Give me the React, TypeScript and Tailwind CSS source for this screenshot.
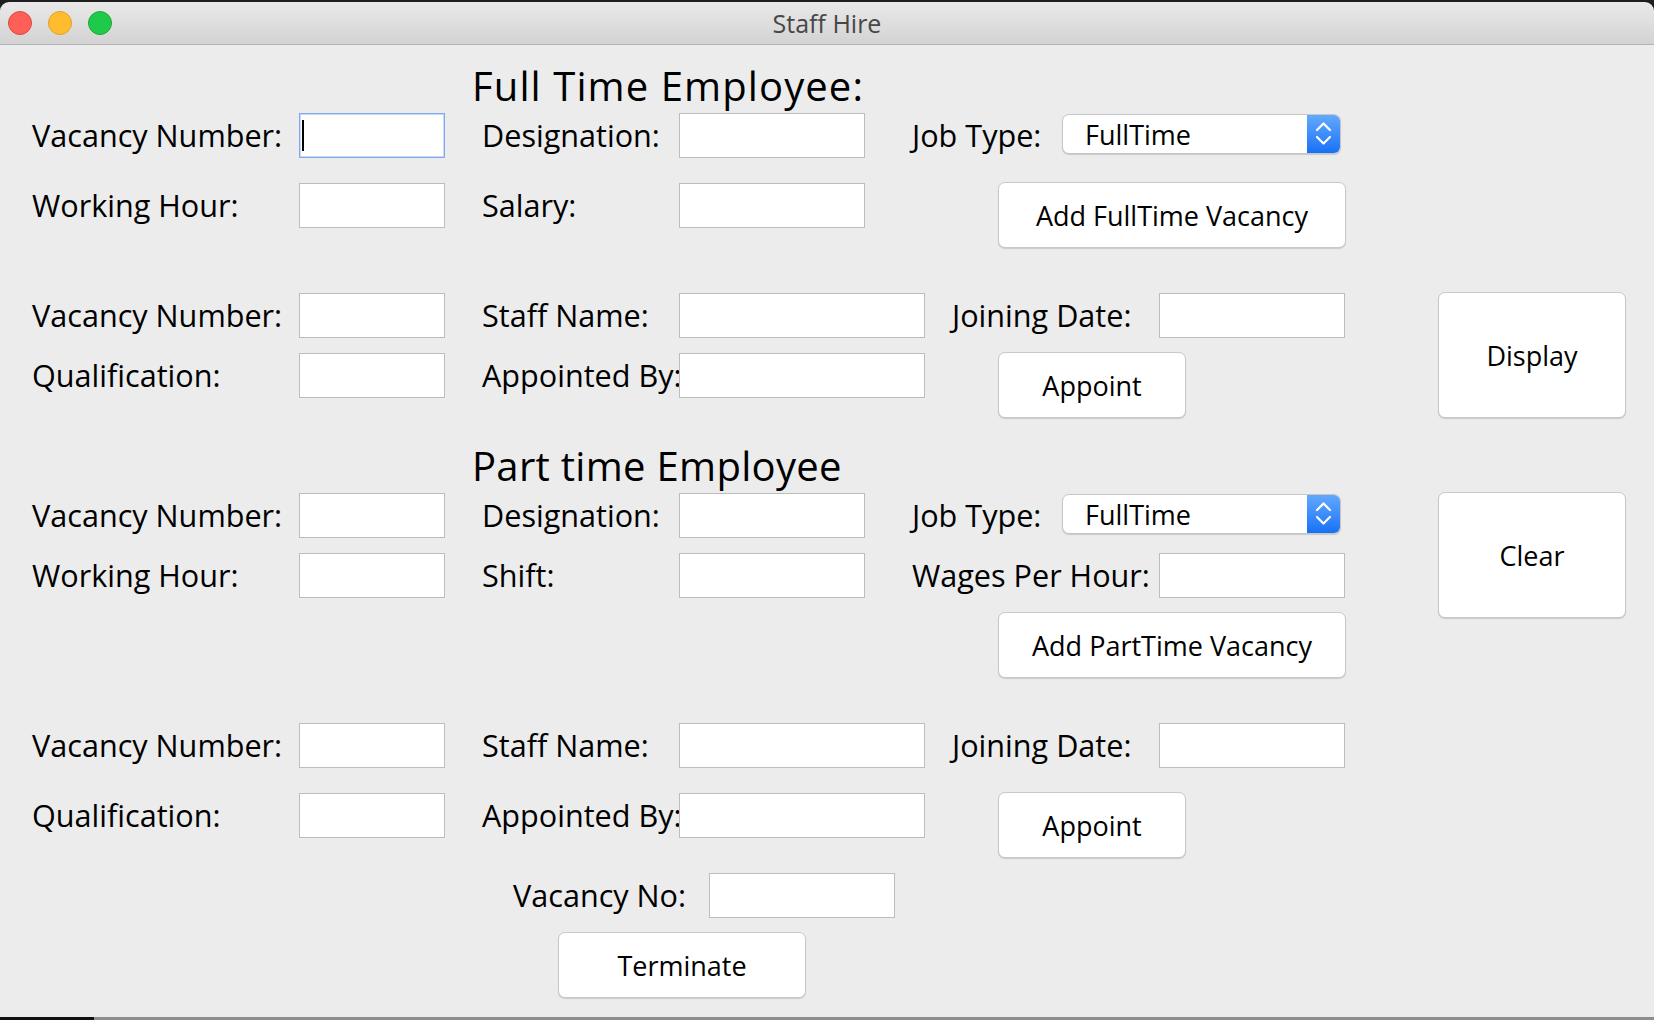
import type { ReactNode } from 'react';
import clsx from 'clsx';

function Label({ className, children }: { className?: string; children: ReactNode }) {
  return (
    <div
      className={clsx(
        'flex h-[45px] shrink-0 items-center whitespace-nowrap text-[30.6px] leading-none text-black',
        className,
      )}
    >
      {children}
    </div>
  );
}

function Field({ className, focused }: { className?: string; focused?: boolean }) {
  return (
    <div
      className={clsx(
        'flex h-[45px] shrink-0 items-center bg-white',
        focused
          ? 'border border-[#7ea9ee] pl-[2px] shadow-[inset_0_0_0_1px_#c6daf6]'
          : 'border border-[#bdbdbd]',
        className,
      )}
    >
      {focused && <div className="h-[31px] w-[2px] bg-black" />}
    </div>
  );
}

function Btn({ className, children }: { className?: string; children: ReactNode }) {
  return (
    <div
      className={clsx(
        'flex shrink-0 items-center justify-center rounded-[7px] border border-[#c8c8c8] bg-white text-[27px] leading-none text-black shadow-[0_1px_1px_rgba(0,0,0,0.14)]',
        className,
      )}
    >
      {children}
    </div>
  );
}

function Combo() {
  return (
    <div className="mt-px flex h-[40px] w-[279px] shrink-0 overflow-hidden rounded-[7px] border border-[#c6c6c6] bg-white shadow-[0_1px_1px_rgba(0,0,0,0.15)]">
      <div className="flex flex-1 items-center pl-[22px] text-[27px] leading-none text-black">FullTime</div>
      <div className="flex w-[33px] items-center justify-center bg-linear-to-b from-[#62a8fd] to-[#1570f6]">
        <svg width="33" height="38" viewBox="0 0 33 38" fill="none">
          <polyline points="10,15 16.5,8.5 23,15" stroke="white" strokeWidth="2.2" strokeLinecap="round" strokeLinejoin="round" />
          <polyline points="10,22 16.5,28.5 23,22" stroke="white" strokeWidth="2.2" strokeLinecap="round" strokeLinejoin="round" />
        </svg>
      </div>
    </div>
  );
}

function Heading({ className, children }: { className?: string; children: ReactNode }) {
  return (
    <div className={clsx('ml-[472px] h-[40px] whitespace-nowrap text-[40px] leading-[40px] text-black', className)}>
      {children}
    </div>
  );
}

export default function App() {
  return (
    <div className="flex h-[1020px] w-full flex-col overflow-hidden bg-[#1e1e1e] font-['Open_Sans',sans-serif]">
      {/* title bar */}
      <div className="mt-[2px] grid h-[43px] shrink-0 grid-cols-[1fr_auto_1fr] items-center rounded-t-[9px] border-b border-[#b3b3b3] bg-linear-to-b from-[#e9e9e9] to-[#d3d3d3]">
        <div className="flex items-center gap-[16px] pl-[8px]">
          <span className="h-[24px] w-[24px] rounded-full border border-[#e1463f] bg-[#fe5f57]" />
          <span className="h-[24px] w-[24px] rounded-full border border-[#dfa123] bg-[#febc2e]" />
          <span className="h-[24px] w-[24px] rounded-full border border-[#1aab2f] bg-[#1fc94a]" />
        </div>
        <div className="pt-px text-[25px] leading-none text-[#474747]">Staff Hire</div>
        <div />
      </div>

      <div className="flex flex-1 bg-[#ececec]">
        <div className="flex w-[1438px] shrink-0 flex-col">
          {/* full time vacancy */}
          <Heading className="mt-[21px] tracking-[1.1px]">Full Time Employee:</Heading>
          <div className="mt-[7px] flex items-start pl-[32px]">
            <Label className="w-[267px]">Vacancy Number:</Label>
            <Field className="w-[146px]" focused />
            <Label className="ml-[37px] w-[197px]">Designation:</Label>
            <Field className="w-[186px]" />
            <Label className="ml-[47px] w-[150px]">Job Type:</Label>
            <Combo />
          </div>
          <div className="mt-[25px] flex items-start pl-[32px]">
            <Label className="w-[267px]">Working Hour:</Label>
            <Field className="w-[146px]" />
            <Label className="ml-[37px] w-[197px]">Salary:</Label>
            <Field className="w-[186px]" />
            <Btn className="-mt-px ml-[133px] h-[66px] w-[348px]">Add FullTime Vacancy</Btn>
          </div>

          {/* appoint full time */}
          <div className="mt-[45px] flex items-start pl-[32px]">
            <Label className="w-[267px]">Vacancy Number:</Label>
            <Field className="w-[146px]" />
            <Label className="ml-[37px] w-[197px]">Staff Name:</Label>
            <Field className="w-[246px]" />
            <Label className="ml-[27px] w-[207px]">Joining Date:</Label>
            <Field className="w-[186px]" />
          </div>
          <div className="mt-[15px] flex items-start pl-[32px]">
            <Label className="w-[267px]">Qualification:</Label>
            <Field className="w-[146px]" />
            <Label className="ml-[37px] w-[197px]">Appointed By:</Label>
            <Field className="w-[246px]" />
            <Btn className="-mt-px ml-[73px] h-[66px] w-[188px]">Appoint</Btn>
          </div>

          {/* part time vacancy */}
          <Heading className="mt-[28px] tracking-[0.3px]">Part time Employee</Heading>
          <div className="mt-[7px] flex items-start pl-[32px]">
            <Label className="w-[267px]">Vacancy Number:</Label>
            <Field className="w-[146px]" />
            <Label className="ml-[37px] w-[197px]">Designation:</Label>
            <Field className="w-[186px]" />
            <Label className="ml-[47px] w-[150px]">Job Type:</Label>
            <Combo />
          </div>
          <div className="mt-[15px] flex items-start pl-[32px]">
            <Label className="w-[267px]">Working Hour:</Label>
            <Field className="w-[146px]" />
            <Label className="ml-[37px] w-[197px]">Shift:</Label>
            <Field className="w-[186px]" />
            <Label className="ml-[47px] w-[247px]">Wages Per Hour:</Label>
            <Field className="w-[186px]" />
          </div>
          <Btn className="ml-[998px] mt-[14px] h-[66px] w-[348px]">Add PartTime Vacancy</Btn>

          {/* appoint part time */}
          <div className="mt-[45px] flex items-start pl-[32px]">
            <Label className="w-[267px]">Vacancy Number:</Label>
            <Field className="w-[146px]" />
            <Label className="ml-[37px] w-[197px]">Staff Name:</Label>
            <Field className="w-[246px]" />
            <Label className="ml-[27px] w-[207px]">Joining Date:</Label>
            <Field className="w-[186px]" />
          </div>
          <div className="mt-[25px] flex items-start pl-[32px]">
            <Label className="w-[267px]">Qualification:</Label>
            <Field className="w-[146px]" />
            <Label className="ml-[37px] w-[197px]">Appointed By:</Label>
            <Field className="w-[246px]" />
            <Btn className="-mt-px ml-[73px] h-[66px] w-[188px]">Appoint</Btn>
          </div>

          {/* terminate */}
          <div className="mt-[15px] flex items-start pl-[513px]">
            <Label className="w-[196px]">Vacancy No:</Label>
            <Field className="w-[186px]" />
          </div>
          <Btn className="ml-[558px] mt-[14px] h-[66px] w-[248px]">Terminate</Btn>
        </div>

        <div className="flex flex-col">
          <Btn className="mt-[247px] h-[126px] w-[188px]">Display</Btn>
          <Btn className="mt-[74px] h-[126px] w-[188px]">Clear</Btn>
        </div>
      </div>

      <div className="flex h-[3px] shrink-0">
        <div className="w-[94px] bg-[#111111]" />
        <div className="flex-1 bg-[#8e8e8e]" />
      </div>
    </div>
  );
}
